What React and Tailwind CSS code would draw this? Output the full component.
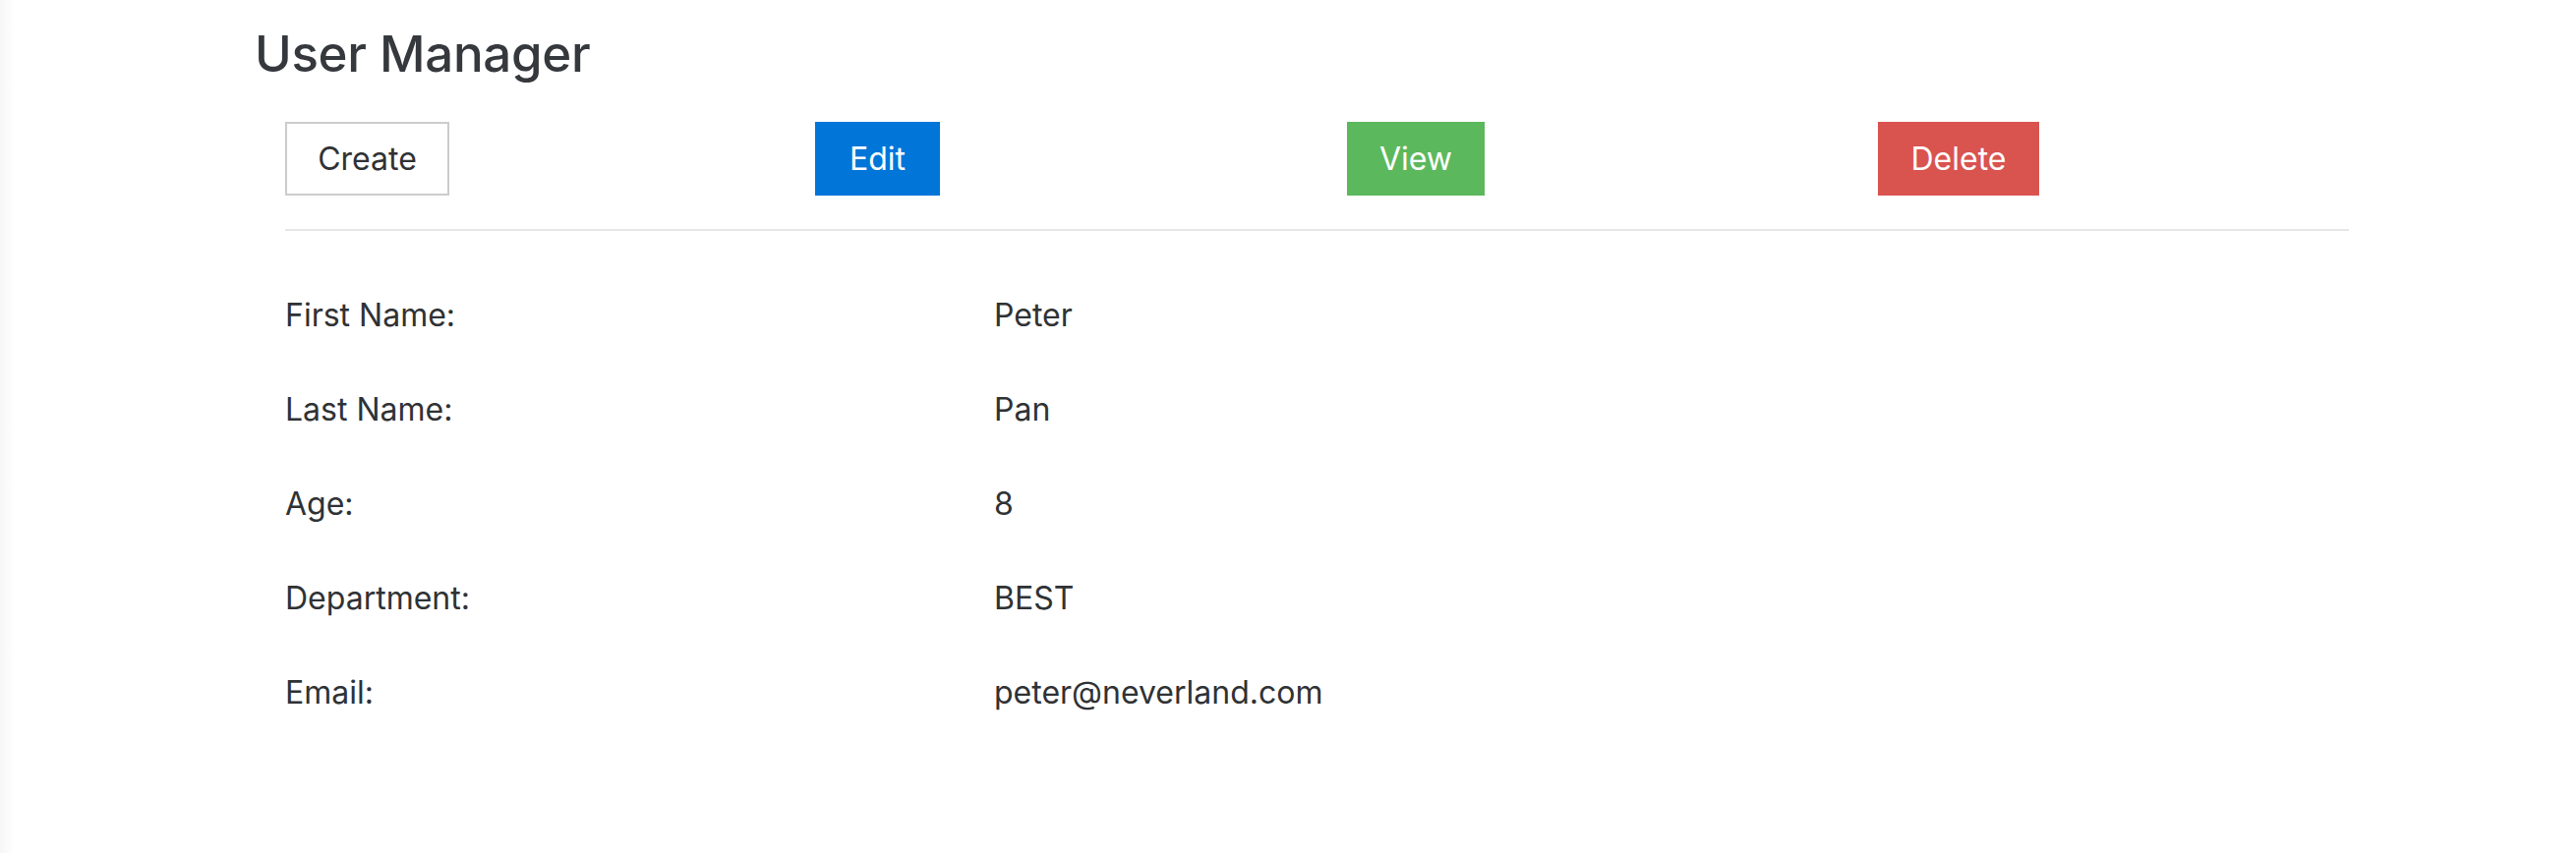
import React from "react";

const user = [
  { label: "First Name:", value: "Peter" },
  { label: "Last Name:", value: "Pan" },
  { label: "Age:", value: "8" },
  { label: "Department:", value: "BEST" },
  { label: "Email:", value: "peter@neverland.com" },
];

function App() {
  const btn =
    "h-[75px] flex items-center justify-center text-[32px] leading-none";

  return (
    <div
      className="min-h-screen bg-[linear-gradient(to_right,#f6f6f6,#ffffff_14px)] text-[#2f3235]"
      style={{ fontFamily: "Inter, 'Noto Sans', sans-serif" }}
    >
      <div className="pl-[259px] pt-[23px]">
        <h1 className="text-[51px] leading-[64px] font-medium tracking-[-0.3px] text-[#35383c]">
          User Manager
        </h1>

        <div className="pl-[31px] mt-[37px]">
          {/* actions */}
          <div className="flex">
            <div className="w-[539px]">
              <button className={`${btn} w-[167px] border-2 border-[#cccccc] bg-white text-[#2f3235]`}>
                Create
              </button>
            </div>
            <div className="w-[541px]">
              <button className={`${btn} w-[127px] bg-[#0275d8] text-white`}>
                Edit
              </button>
            </div>
            <div className="w-[540px]">
              <button className={`${btn} w-[140px] bg-[#5cb85c] text-white`}>
                View
              </button>
            </div>
            <div>
              <button className={`${btn} w-[164px] bg-[#d9534f] text-white`}>
                Delete
              </button>
            </div>
          </div>

          <div className="mt-[34px] h-[2px] w-[2099px] bg-[#e6e6e6]"></div>

          {/* details */}
          <div className="mt-[66px] flex flex-col gap-[56px]">
            {user.map((row) => (
              <div key={row.label} className="flex text-[32px] leading-[40px]">
                <span className="w-[721px]">{row.label}</span>
                <span>{row.value}</span>
              </div>
            ))}
          </div>
        </div>
      </div>
    </div>
  );
}

export default App;
